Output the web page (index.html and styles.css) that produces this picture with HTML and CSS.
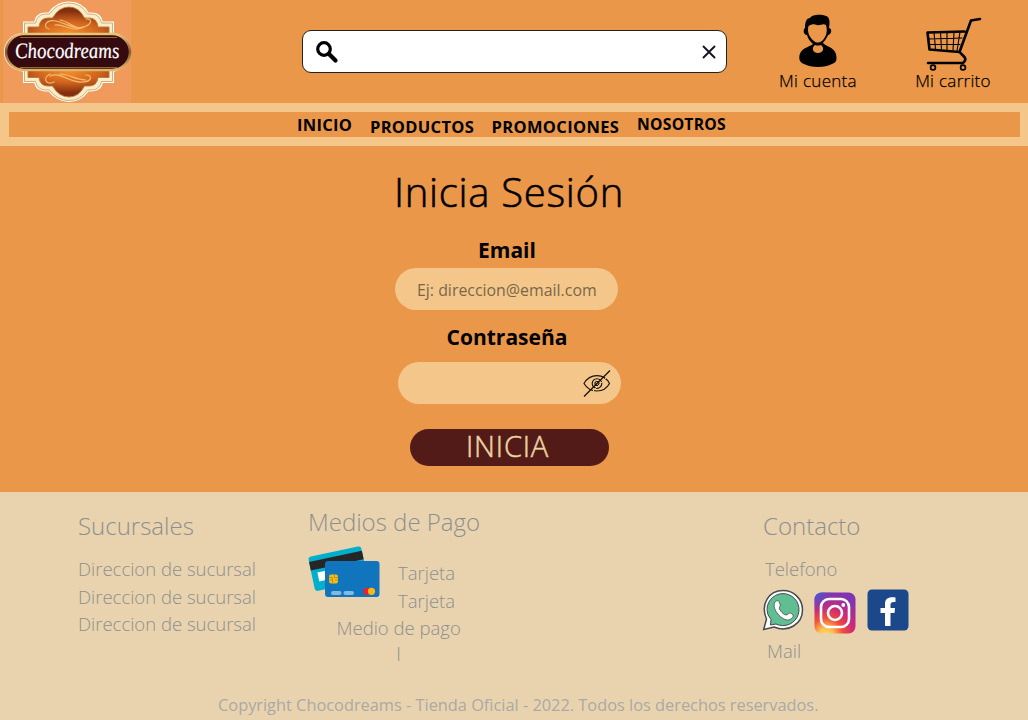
FILE: index.html
```html
<!DOCTYPE html>
<html lang="es">
<head>
<meta charset="utf-8">
<title>Chocodreams - Inicia Sesión</title>
<link rel="stylesheet" href="styles.css">
</head>
<body>
<header class="header">
  <svg class="logo" viewBox="0 0 132 103" width="132" height="103">
    <defs>
      <radialGradient id="glow" cx=".5" cy=".9" r=".75"><stop offset="0" stop-color="#f58d2c"/><stop offset=".5" stop-color="#d2651e"/><stop offset="1" stop-color="#84300f"/></radialGradient>
      <radialGradient id="glow2" cx=".5" cy=".1" r=".75"><stop offset="0" stop-color="#f58d2c"/><stop offset=".5" stop-color="#d2651e"/><stop offset="1" stop-color="#84300f"/></radialGradient>
      <linearGradient id="gold" x2="0" y2="1"><stop offset="0" stop-color="#e8c478"/><stop offset=".5" stop-color="#8c552b"/><stop offset="1" stop-color="#dfb665"/></linearGradient>
    </defs>
    <path d="M3 0H131V103H3z" fill="#f09a5c"/>
    <path d="M24 34V22.500H35Q36 14 45 13.500H49Q56 2.500 69 2.500T88 13.500H92Q101 14 102 22.500H113V34L120 36V68L113 71V82H102Q101 90 92 90.500H88Q81 101 69 101T49 90.500H45Q36 90 35 82H24V71L16 68V36z" fill="#fff" stroke="#fff" stroke-width="2"/>
    <path d="M24.500 34V23H35.500Q37 14.500 45 14H49.500Q57 3 69 3T87.500 14H92Q100 14.500 101.500 23H112.500V81.500H101.500Q100 89.500 92 90H87.500Q81 100.500 69 100.500T49.500 90H45Q37 89.500 35.500 81.500H24.500z" fill="#faecc4" stroke="#c79a5c" stroke-width=".8"/>
    <path d="M28 35V27H39Q40 18 48 18H52.500Q59 7 69 7T84.500 18H89Q97 18 98 27H109V35z" fill="url(#glow)" stroke="#b67a3a" stroke-width=".9"/>
    <path d="M28 69V77.500H39Q40 86 48 86H52.500Q59 97 69 97T84.500 86H89Q97 86 98 77.500H109V69z" fill="url(#glow2)" stroke="#b67a3a" stroke-width=".9"/>
    <g fill="none" stroke="#f4bd70" stroke-width="1.200" stroke-linecap="round"><path d="M49 29C42 27 46 19 56 21C66 23 74 30 83 27C92 25 93 18 86 19M55 25C65 24 73 33 84 27M60 20C68 21 74 28 80 28"/><path d="M50 74C42 78 46 86 54 82M50 76C60 71 70 83 82 82C92 82 93 75 86 75M60 74C70 74 75 80 86 80"/></g>
    <rect x="4" y="33" width="127" height="38" rx="19" fill="#fff"/>
    <rect x="6" y="34" width="124" height="36" rx="18" fill="#350b10" stroke="url(#gold)" stroke-width="2.500"/>
    <path d="M20 37.500H117M20 67.500H117" stroke="#b37b42" stroke-width=".8"/>
    <text class="logo-text" transform="translate(15.500 58) scale(.86 1) skewX(6)">Chocodreams</text>
  </svg>
  <div class="search">
    <svg width="24" height="24" viewBox="0 0 24 24" fill="none" stroke="#000"><circle cx="9" cy="9" r="6.300" stroke-width="3.200"/><path d="M14 14L20.500 20.500" stroke-width="4.200" stroke-linecap="round"/></svg>
    <svg width="14" height="14" viewBox="0 0 14 14"><path d="M1.500 1.500L12.500 12.500M12.500 1.500L1.500 12.500" stroke="#15151f" stroke-width="1.900" stroke-linecap="round"/></svg>
  </div>
  <a class="account">
    <svg width="38" height="54" viewBox="0 0 38 54"><path fill="#000" d="M6 14C6 7 8 4 11 4C13 0 23 0 27 2C31 3 31 9 30 14C34 15 32 21 29 21C27 26 25 27 24 29C26 32 35 33 37 40C38 46 38 48 33 50C26 54 12 54 5 50C0 48 0 45 .5 41C3 33 11 33 14 30C11 27 9 25 8 21C4 21 4 15 6 14z"/><path fill="#eb9749" d="M9.500 12C13 10 15 10 18 11C21 12 24 9 27 11C29 18 27 23 23 27C20 29 17 29 15 27C10 23 8 18 9.500 12zM16 31Q19 32 22 31C26 34 24 39 19 39C14 39 12 34 16 31z"/></svg>
    <span>Mi cuenta</span>
  </a>
  <a class="cart">
    <svg width="58" height="54" viewBox="0 0 58 54" fill="none" stroke="#000"><path d="M55 2L46 3.500L34.500 35L4.500 32.500L2.500 15.500L39.500 14.500M34.500 35C37 38 43 41 39 45Q38 46.500 35 46L3 46" stroke-width="2.600" stroke-linecap="round" stroke-linejoin="round"/><path d="M9 15.500L10.500 32M15.500 15.500L16.500 32.500M22 15V33M29 15L28 33.500M35 15L32 34M3.500 22L37.500 21M4 27.500L35.500 27.500" stroke-width="1.100"/><g stroke-width="1.700"><circle cx="8" cy="50.500" r="2.400"/><circle cx="38" cy="50.500" r="2.400"/></g></svg>
    <span>Mi carrito</span>
  </a>
</header>
<nav class="nav">
  <div class="nav-inner">
    <a class="nav-home">INICIO</a><a class="nav-products">PRODUCTOS</a><a class="nav-promos">PROMOCIONES</a><a class="nav-about">NOSOTROS</a>
  </div>
</nav>
<main class="login">
  <h1 class="title">Inicia Sesión</h1>
  <div class="label">Email</div>
  <div class="field email"><span>Ej: direccion@email.com</span></div>
  <div class="label label-pass">Contraseña</div>
  <div class="field password">
    <svg width="28" height="28" viewBox="0 0 28 28" fill="none" stroke="#17120c" stroke-width="1.150"><path d="M1 14.500C7 4 21 4 26.500 14.500C21 24.500 7 24.500 1 14.500z"/><circle cx="14" cy="14.500" r="4.800"/><circle cx="14" cy="14.500" r="2"/><path d="M3 29L29 3" stroke="#f4c68a" stroke-width="1"/><path d="M1 27.500L27 1.500"/></svg>
  </div>
  <div class="button">INICIA</div>
</main>
<footer class="footer">
  <div class="columns">
    <section class="branches">
      <h2>Sucursales</h2>
      <p>Direccion de sucursal</p><p>Direccion de sucursal</p><p class="last">Direccion de sucursal</p>
    </section>
    <section class="payments">
      <h2>Medios de Pago</h2>
      <div class="cards">
        <svg width="73" height="52" viewBox="0 0 73 52"><g transform="rotate(-12 1 11)"><rect x="0" y="11" width="54" height="35" rx="3" fill="#00aece"/><path d="M0 16H54V24.500H0z" fill="#272626"/><path d="M6 28H22V37H6z" fill="#fff"/></g><rect x="17" y="15" width="54.500" height="36" rx="3" fill="#1075bd"/><rect x="21" y="28.500" width="9" height="9" rx="2" fill="#f2bd19"/><path d="M21 31.500H24.500V37M30 31.500H26.500V29M21 34H24M27 34H30" fill="none" stroke="#b77d0b" stroke-width=".7"/><g fill="#83b8df"><rect x="23" y="45" width="10.500" height="4" rx="2"/><rect x="35.500" y="45" width="10.500" height="4" rx="2"/></g><circle cx="59" cy="45.300" r="3.600" fill="#ed2029"/><circle cx="63.500" cy="45.300" r="3.600" fill="#fdb714"/></svg>
        <div class="card-names"><p>Tarjeta</p><p>Tarjeta</p></div>
      </div>
      <p class="method">Medio de pago</p><p class="method-end">l</p>
    </section>
    <section class="contact">
      <h2>Contacto</h2>
      <p class="phone">Telefono</p>
      <div class="social">
        <svg class="whatsapp" width="42" height="42" viewBox="0 0 42 42"><path d="M.7 40.500L3.500 30C-3 15 6 1.500 20 1.500C31 1.500 39.500 10 39.500 21C39.500 35 25 44 11 38z" fill="#fff" stroke="#464b4d" stroke-width="1.500"/><path d="M4 20.500A16 16 0 1 1 13 35L7.500 36L8 30.500Q4 26 4 20.500z" fill="#61bd92" stroke="#464b4d"/><path d="M12 13C14 11 16 11 17 15C18 18 15 18 17 21C19 24 21 26 24 26C26 24 27 23 30 26C31 28 28 30 26 31C19 32 8 20 12 13z" fill="#fff" stroke="#464b4d" stroke-width=".8"/></svg>
        <svg class="instagram" width="42" height="42" viewBox="0 0 42 42"><defs><radialGradient id="ig" cx=".28" cy="1.030" r="1.030"><stop offset="0" stop-color="#ffdb72"/><stop offset=".16" stop-color="#ffc354"/><stop offset=".4" stop-color="#f04d39"/><stop offset=".65" stop-color="#ce2978"/><stop offset="1" stop-color="#8134b3"/></radialGradient><radialGradient id="igb" cx="0" cy="0" r=".55"><stop offset="0" stop-color="#3565de"/><stop offset="1" stop-color="#7f32b4" stop-opacity="0"/></radialGradient></defs><rect x=".5" y=".5" width="41" height="41" rx="7" fill="url(#ig)"/><rect x=".5" y=".5" width="41" height="41" rx="7" fill="url(#igb)"/><g fill="none" stroke="#fff" stroke-width="2.600"><rect x="7" y="7" width="28" height="28" rx="8"/><circle cx="21" cy="21" r="7"/></g><circle cx="29.300" cy="13" r="1.900" fill="#fff"/></svg>
        <svg class="facebook" width="42" height="42" viewBox="0 0 42 42"><rect x=".5" y=".5" width="41" height="41" rx="4.500" fill="#1b478b"/><path d="M18 37V24H13.500V19H18V15C18 10 21 7.500 28.500 8.500V13C25 12.500 23.500 13.500 23.500 16V19H28L27.500 24H23.500V37z" fill="#fff"/></svg>
      </div>
      <p class="mail">Mail</p>
    </section>
  </div>
  <p class="copyright">Copyright Chocodreams - Tienda Oficial - 2022. Todos los derechos reservados.</p>
</footer>
</body>
</html>
```
FILE: styles.css
```css
* { box-sizing: border-box; }
body { margin: 0; width: 1028px; height: 720px; overflow: hidden; background: #eb9749; color: #000; font-family: "Open Sans", "Noto Sans", sans-serif; }
h1, h2, p { margin: 0; font-weight: 300; }
svg { display: block; flex: none; overflow: visible; }
.header { height: 103px; display: flex; align-items: flex-start; }
.logo-text { font: italic 22px "Liberation Serif", serif; fill: #fff; stroke: #fff; stroke-width: .2px; }
.search { width: 425px; height: 43px; margin: 30px 1px 0 170px; padding: 0 10px 0 12px; display: flex; align-items: center; justify-content: space-between; background: #fff; border: 1px solid #222; border-radius: 9px; }
.account, .cart { display: flex; flex-direction: column; align-items: center; white-space: nowrap; font-size: 17px; line-height: 20px; font-weight: 300; letter-spacing: .3px; -webkit-text-stroke: .25px #000; }
.account { width: 78px; margin: 14px 0 0 51px; }
.account span { margin-top: 3px; }
.cart { width: 78px; margin: 17px 0 0 57px; }
.cart svg { margin-left: 2px; }
.nav { height: 43px; padding: 9px 8px 9px 9px; background: #f4c68a; }
.nav-inner { height: 25px; padding-left: 288px; display: flex; align-items: flex-start; background: #eb9749; font-weight: 700; font-size: 16.500px; line-height: 20px; white-space: nowrap; }
.nav a { flex: none; }
.nav-home { width: 73px; padding-top: 3px; letter-spacing: .3px; }
.nav-products { width: 121.500px; padding-top: 5px; letter-spacing: .3px; }
.nav-promos { width: 145.500px; padding-top: 5px; letter-spacing: .35px; }
.nav-about { padding-top: 2px; font-size: 15.700px; letter-spacing: .25px; }
.login { height: 346px; padding-top: 20px; display: flex; flex-direction: column; }
.title { width: 1018px; text-align: center; font-size: 40px; line-height: 52px; letter-spacing: .7px; -webkit-text-stroke: .6px #000; }
.label { width: 1014px; margin-top: 18px; text-align: center; font-size: 21px; line-height: 28px; font-weight: 700; }
.field { width: 223px; height: 42px; border-radius: 21px; background: #f4c68a; display: flex; align-items: center; }
.email { margin: 4px 0 0 395px; padding: 0 0 0 22px; font-size: 17px; color: #796649; white-space: nowrap; }
.email span { transform: scaleX(.935); transform-origin: left; }
.label-pass { margin-top: 13px; }
.password { margin: 11px 0 0 398px; padding-right: 10px; justify-content: flex-end; }
.button { width: 199px; height: 37px; margin: 25px 0 0 410px; padding-right: 4px; border-radius: 19px; background: #531b18; color: #ecd3a4; text-align: center; font-size: 29px; line-height: 33px; font-weight: 300; letter-spacing: .8px; -webkit-text-stroke: .5px #ecd3a4; }
.footer { height: 228px; background: #e9d3ae; color: #8d8f8e; }
.columns { height: 203px; padding-left: 78px; display: flex; }
.branches { width: 230px; padding-top: 18px; }
.payments { width: 455px; padding-top: 14px; }
.contact { width: 200px; padding-top: 18px; }
h2 { font-size: 24px; line-height: 32px; }
.columns p { font-size: 18.500px; line-height: 28px; }
.branches h2, .contact h2 { margin-bottom: 13px; }
.branches .last { line-height: 26px; }
.cards { display: flex; }
.cards svg { margin-top: 8px; }
.card-names { margin: 21px 0 0 17px; }
.columns .method { padding-left: 28.500px; line-height: 26px; }
.columns .method-end { padding-left: 88.500px; line-height: 26px; }
.columns .phone { padding-left: 2px; }
.social { display: flex; height: 48px; margin-top: 6px; }
.instagram { margin: 3px 0 0 9px; }
.facebook { margin-left: 11px; }
.mail { padding-left: 4px; }
.copyright { padding-left: 218px; font-size: 16.350px; line-height: 20px; font-weight: 400; color: #aaa9a6; white-space: nowrap; }
```
